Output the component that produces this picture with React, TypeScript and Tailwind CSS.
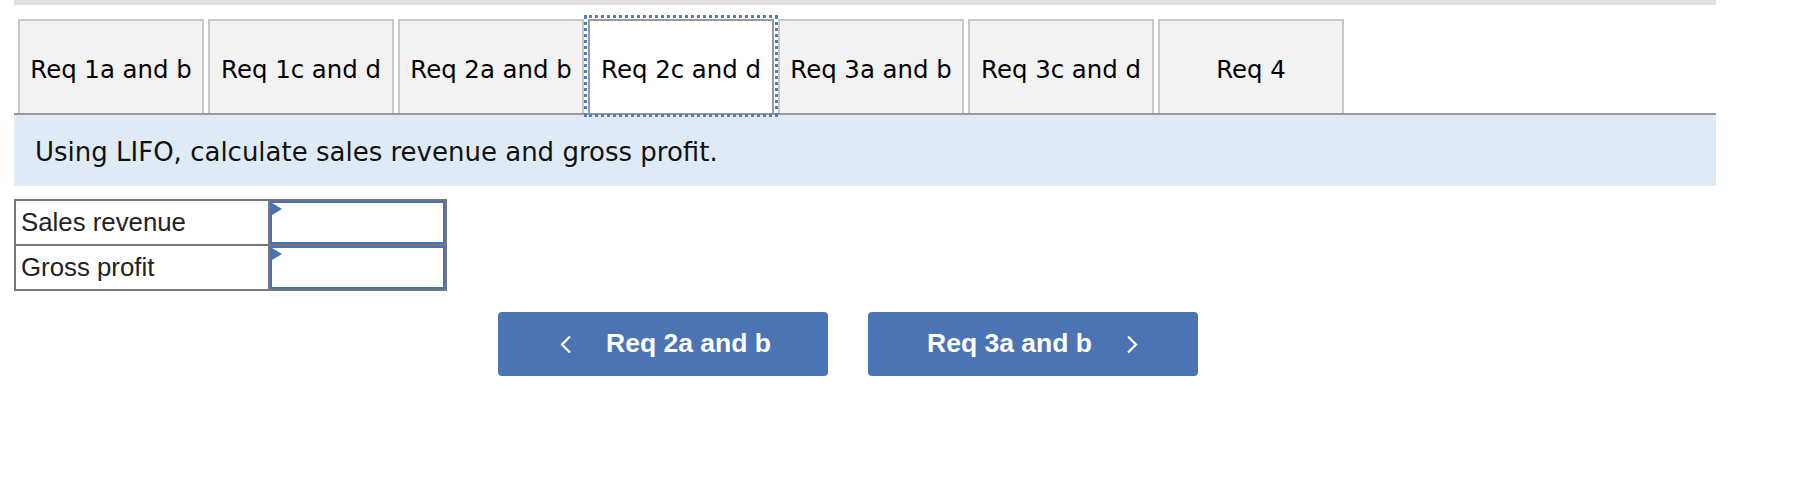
import React from "react";

const tabs = [
  "Req 1a and b",
  "Req 1c and d",
  "Req 2a and b",
  "Req 2c and d",
  "Req 3a and b",
  "Req 3c and d",
  "Req 4",
];

function Chevron({ dir }: { dir: "left" | "right" }) {
  return (
    <svg width="13" height="19" viewBox="0 0 13 19" fill="none">
      {dir === "left" ? (
        <path d="M11 1.5 L3 9.5 L11 17.5" stroke="white" strokeWidth="2.2" />
      ) : (
        <path d="M2 1.5 L10 9.5 L2 17.5" stroke="white" strokeWidth="2.2" />
      )}
    </svg>
  );
}

function InputCell() {
  return (
    <div className="relative w-[175px] h-full border-2 border-[#4a72b2] bg-white">
      <svg className="absolute left-0 top-0" width="11" height="13" viewBox="0 0 11 13">
        <polygon points="0,0 10,6 0,12" fill="#4a72b2" />
      </svg>
    </div>
  );
}

export default function App() {
  return (
    <div className="w-[1818px] h-[486px] bg-white" style={{ fontFamily: "'DejaVu Sans', Verdana, sans-serif" }}>
      <div className="ml-[14px] w-[1702px]">
        <div className="h-[5px] bg-[#e0e0e0]" />
        <div className="h-[14px]" />
        <div className="flex items-end gap-[4px] pl-[4px] border-b-2 border-[#999999]">
          {tabs.map((t) => {
            const active = t === "Req 2c and d";
            return (
              <div
                key={t}
                className={
                  active
                    ? "w-[186px] h-[94px] flex items-center justify-center pt-[7px] bg-white border-2 border-b-0 border-[#999999] outline-[3px] outline-dotted outline-[#4a7cc9] outline-offset-[1px] text-[24.4px] text-black"
                    : "w-[186px] h-[94px] flex items-center justify-center pt-[7px] bg-[#f2f2f2] border-2 border-b-0 border-[#c8c8c8] text-[24.4px] text-black"
                }
              >
                {t}
              </div>
            );
          })}
        </div>
        <div className="h-[71px] bg-[#deebf7] flex items-center pl-[21px] pt-[3px] text-[26px] text-[#111]">
          Using LIFO, calculate sales revenue and gross profit.
        </div>
      </div>
      <div
        className="ml-[14px] mt-[13px] w-[433px] border-2 border-[#777777] text-[25.8px] text-[#222]"
        style={{ fontFamily: "'Liberation Sans', Arial, sans-serif" }}
      >
        <div className="flex h-[45px] border-b-2 border-[#777777]">
          <div className="w-[254px] border-r-2 border-[#777777] flex items-center pl-[5px]">Sales revenue</div>
          <InputCell />
        </div>
        <div className="flex h-[43px]">
          <div className="w-[254px] border-r-2 border-[#777777] flex items-center pl-[5px]">Gross profit</div>
          <InputCell />
        </div>
      </div>
      <div
        className="flex gap-[40px] ml-[498px] mt-[21px]"
        style={{ fontFamily: "'Liberation Sans', Arial, sans-serif" }}
      >
        <button className="w-[330px] h-[64px] rounded-[4px] bg-[#4a74b4] text-white font-bold text-[26.5px] flex items-center justify-center gap-[34px] pl-[4px]">
          <Chevron dir="left" />
          <span>Req 2a and b</span>
        </button>
        <button className="w-[330px] h-[64px] rounded-[4px] bg-[#4a74b4] text-white font-bold text-[26.5px] flex items-center justify-center gap-[34px]">
          <span>Req 3a and b</span>
          <Chevron dir="right" />
        </button>
      </div>
    </div>
  );
}
